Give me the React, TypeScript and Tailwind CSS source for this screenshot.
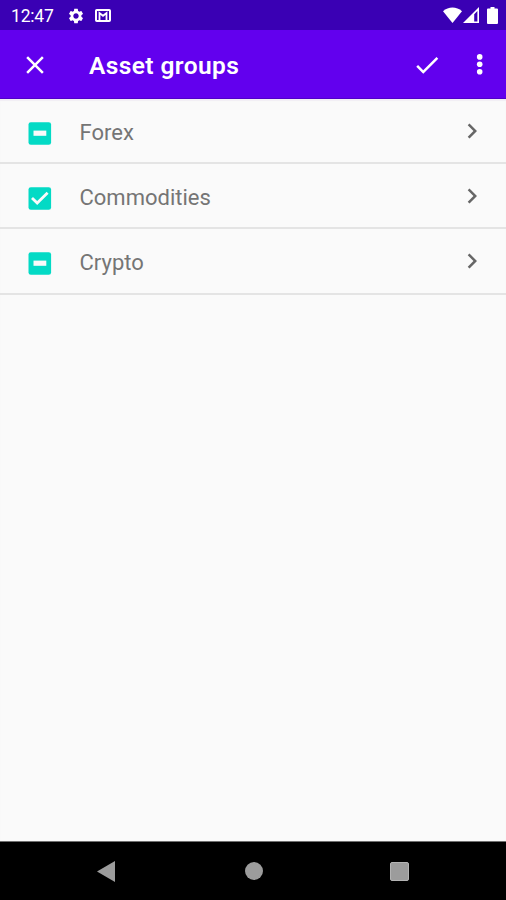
import { MdCheck, MdChevronRight, MdClose, MdSettings } from 'react-icons/md';

type GroupState = 'partial' | 'checked';

const groups: { name: string; state: GroupState }[] = [
  { name: 'Forex', state: 'partial' },
  { name: 'Commodities', state: 'checked' },
  { name: 'Crypto', state: 'partial' },
];

export default function App() {
  return (
    <div className="flex h-[900px] w-[506px] flex-col overflow-hidden bg-[#fafafa] font-['Roboto',sans-serif]">
      <StatusBar />
      <AppBar />
      <main className="flex-1 shadow-[inset_0_2px_1px_#f1eef4]">
        {groups.map((group) => (
          <GroupRow key={group.name} name={group.name} state={group.state} />
        ))}
      </main>
      <NavBar />
    </div>
  );
}

function StatusBar() {
  return (
    <div className="flex h-[30px] shrink-0 items-center bg-[#3a00b4] pr-2 pl-[11px] text-white">
      <span className="w-14 pt-[3px] text-[17.5px] leading-none tracking-[-0.2px]">12:47</span>
      <MdSettings className="mt-px size-[18px]" />
      <svg className="mt-px ml-2.5 h-[13px] w-4" viewBox="0 0 16 13">
        <rect x="1" y="1" width="14" height="11" rx="0.8" fill="none" stroke="currentColor" strokeWidth="2" />
        <path d="M4.5 12V4L8 6.800 11.500 4v8" fill="none" stroke="currentColor" strokeWidth="1.8" />
      </svg>
      <svg className="ml-auto h-4 w-[19px]" viewBox="0 0 19 16">
        <path d="M9.5 16 0 4.200C5.500-.8 13.500-.8 19 4.200z" fill="currentColor" />
      </svg>
      <svg className="ml-px h-4 w-4" viewBox="0 0 16 16">
        <path d="M16 0v16H0zM14.400 4 11.200 7.200v7.300h3.200z" fill="currentColor" fillRule="evenodd" />
      </svg>
      <svg className="ml-2 h-[17px] w-[11px]" viewBox="0 0 11 17">
        <path d="M3.500 0h4v1.600H10a1 1 0 0 1 1 1V16a1 1 0 0 1-1 1H1a1 1 0 0 1-1-1V2.600a1 1 0 0 1 1-1h2.500z" fill="currentColor" />
      </svg>
    </div>
  );
}

function AppBar() {
  return (
    <header className="flex h-[69px] shrink-0 items-center border-b border-[#5000c8] bg-[#6200ee] pr-3 pl-5 text-white">
      <button aria-label="Close" className="pt-px">
        <MdClose className="size-[30px]" />
      </button>
      <h1 className="ml-[39px] pt-1 text-[24.5px] leading-none font-semibold tracking-[0.4px]">Asset groups</h1>
      <button aria-label="Apply" className="ml-auto pt-px">
        <MdCheck className="size-[30px]" />
      </button>
      <button aria-label="More options" className="ml-[22px]">
        <svg className="size-[30px]" viewBox="0 0 30 30" fill="currentColor">
          <circle cx="15.7" cy="7.9" r="2.8" />
          <circle cx="15.7" cy="15.3" r="2.8" />
          <circle cx="15.7" cy="22.7" r="2.8" />
        </svg>
      </button>
    </header>
  );
}

function GroupRow({ name, state }: { name: string; state: GroupState }) {
  return (
    <div className="flex h-[65.2px] items-center border-b-2 border-[#e4e4e4] pr-[19px] pl-7">
      <Checkbox state={state} />
      <span className="ml-[27.5px] pt-1 text-[22px] leading-none text-[#757575]">{name}</span>
      <MdChevronRight className="ml-auto size-[30px] text-[#666666]" />
    </div>
  );
}

function Checkbox({ state }: { state: GroupState }) {
  return (
    <svg className="mt-[5px] h-[23px] w-6 shrink-0" viewBox="0 0 24 23" role="checkbox" aria-checked={state === 'checked' ? true : 'mixed'}>
      <rect x="0.5" y="0.2" width="22.6" height="22.6" rx="2.4" fill="#03dac5" />
      {state === 'checked' ? (
        <path d="M4 11 9.200 16 19.600 5.800" fill="none" stroke="#fafafa" strokeWidth="2.8" />
      ) : (
        <rect x="5.5" y="8.6" width="12.8" height="5.2" fill="#fafafa" />
      )}
    </svg>
  );
}

function NavBar() {
  return (
    <nav className="flex h-[59px] shrink-0 items-center border-t border-[#707070] bg-black pl-[97px] text-[#9c9c9c]">
      <svg className="h-[21px] w-[18px]" viewBox="0 0 18 21">
        <path d="M0 10.500 18 0v21z" fill="currentColor" />
      </svg>
      <div className="ml-[129.5px] size-[18.5px] rounded-full bg-[#9c9c9c]" />
      <div className="ml-[126.5px] size-[19px] rounded-[2px] border border-[#b4b4b4] bg-[#9c9c9c]" />
    </nav>
  );
}
